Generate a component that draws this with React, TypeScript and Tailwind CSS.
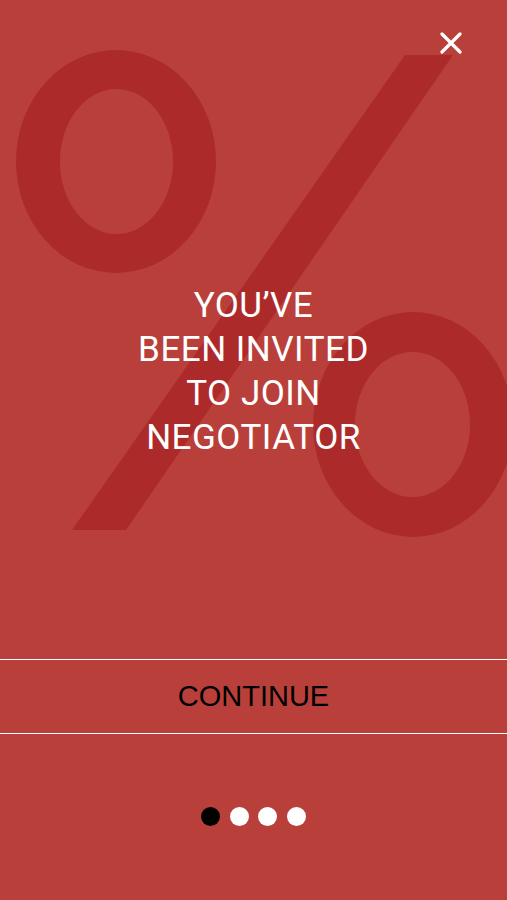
import React from "react";

export default function App() {
  return (
    <div className="relative w-full h-[900px] overflow-hidden bg-[#b9403a]">
      <svg
        className="absolute inset-0 pointer-events-none"
        width="507"
        height="900"
        viewBox="0 0 507 900"
        aria-hidden="true"
      >
        <ellipse cx="116" cy="161.5" rx="100" ry="111.5" fill="#ad2a2a" />
        <ellipse cx="116.5" cy="161.5" rx="56.5" ry="72.5" fill="#b9403a" />
        <polygon points="405,55 453,55 126,530 72,530" fill="#ad2a2a" />
        <ellipse cx="413" cy="424.5" rx="100" ry="112.5" fill="#ad2a2a" />
        <ellipse cx="412.5" cy="424.5" rx="57.5" ry="72.5" fill="#b9403a" />
      </svg>

      <div className="relative flex flex-col">
        <div className="flex justify-end pt-[32px] pr-[45px]">
          <button className="w-[22px] h-[22px]" aria-label="Close">
            <svg width="22" height="22" viewBox="0 0 22 22">
              <path
                d="M2 2 L20 20 M20 2 L2 20"
                stroke="#ffffff"
                strokeWidth="3.2"
                strokeLinecap="round"
              />
            </svg>
          </button>
        </div>

        <h1
          className="mt-[230px] text-center text-white text-[35px] leading-[44px] font-normal tracking-[0.5px]"
          style={{ fontFamily: "Roboto, 'Liberation Sans', sans-serif" }}
        >
          YOU’VE
          <br />
          BEEN INVITED
          <br />
          TO JOIN
          <br />
          NEGOTIATOR
        </h1>

        <div className="mt-[199px] h-[75px] border-y border-white flex items-center justify-center">
          <span
            className="text-black text-[29px] leading-none"
            style={{ fontFamily: "'Liberation Sans', Arial, sans-serif" }}
          >
            CONTINUE
          </span>
        </div>

        <div className="mt-[73px] flex justify-center gap-[9.5px]">
          <span className="w-[19px] h-[19px] rounded-full bg-black" />
          <span className="w-[19px] h-[19px] rounded-full bg-white" />
          <span className="w-[19px] h-[19px] rounded-full bg-white" />
          <span className="w-[19px] h-[19px] rounded-full bg-white" />
        </div>
      </div>
    </div>
  );
}
